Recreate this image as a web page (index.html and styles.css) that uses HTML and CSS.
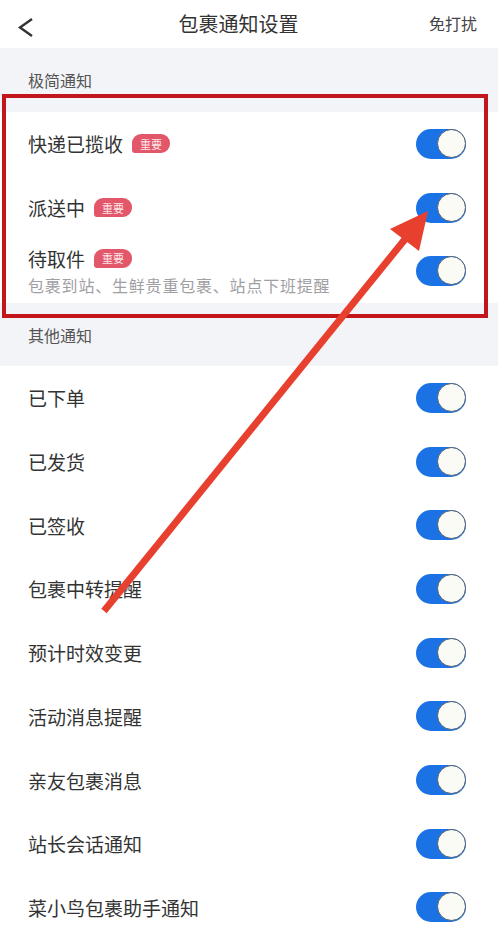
FILE: index.html
```html
<!DOCTYPE html>
<html lang="zh-CN">

<head>
    <meta charset="UTF-8">
    <meta name="viewport" content="width=device-width, initial-scale=1.0">
    <title>包裹通知设置</title>
    <link rel="stylesheet" href="styles.css">
</head>

<body>
    <div class="page">
        <header class="topbar">
            <div class="back">
                <svg width="40" height="40" viewBox="0 0 40 40">
                    <polyline points="32,13 20,21.5 32,30" fill="none" stroke="#333" stroke-width="2.4" stroke-linejoin="miter"/>
                </svg>
            </div>
            <h1 class="title">包裹通知设置</h1>
            <div class="dnd">免打扰</div>
        </header>

        <div class="section-title first">极简通知</div>
        <div class="group important">
            <div class="row">
                <div class="label">快递已揽收 <span class="tag">重要</span></div>
                <span class="switch"></span>
            </div>
            <div class="row">
                <div class="label">派送中 <span class="tag">重要</span></div>
                <span class="switch"></span>
            </div>
            <div class="row">
                <div class="label-wrap">
                    <div class="label">待取件 <span class="tag">重要</span></div>
                    <div class="sub">包裹到站、生鲜贵重包裹、站点下班提醒</div>
                </div>
                <span class="switch"></span>
            </div>
        </div>

        <div class="section-title">其他通知</div>
        <div class="group others">
            <div class="row"><div class="label">已下单</div><span class="switch"></span></div>
            <div class="row"><div class="label">已发货</div><span class="switch"></span></div>
            <div class="row"><div class="label">已签收</div><span class="switch"></span></div>
            <div class="row"><div class="label">包裹中转提醒</div><span class="switch"></span></div>
            <div class="row"><div class="label">预计时效变更</div><span class="switch"></span></div>
            <div class="row"><div class="label">活动消息提醒</div><span class="switch"></span></div>
            <div class="row"><div class="label">亲友包裹消息</div><span class="switch"></span></div>
            <div class="row"><div class="label">站长会话通知</div><span class="switch"></span></div>
            <div class="row"><div class="label">菜小鸟包裹助手通知</div><span class="switch"></span></div>
        </div>

        <!-- annotation drawn over the screenshot -->
        <svg class="marks" width="498" height="943" viewBox="0 0 498 943">
            <rect x="4" y="96" width="482" height="220" fill="none" stroke="#c3161c" stroke-width="4"/>
            <line x1="104" y1="611" x2="406" y2="238" stroke="#e8402f" stroke-width="7" stroke-linecap="butt"/>
            <polygon points="428,211 390,229 419,251" fill="#e8402f"/>
        </svg>
    </div>
</body>

</html>
```

FILE: styles.css
```css
body {
    margin: 0;
    font-family: "Noto Sans CJK SC", "Noto Sans", sans-serif;
    background-color: #ffffff;
    color: #333;
}

.page {
    position: relative;
    display: flex;
    flex-direction: column;
    width: 498px;
    height: 943px;
    overflow: hidden;
    background-color: #f3f4f8;
}

.topbar {
    display: grid;
    grid-template-columns: 1fr auto 1fr;
    align-items: center;
    height: 48px;
    flex-shrink: 0;
    padding: 0 21px 8px 0;
    box-sizing: border-box;
    background-color: #ffffff;
}

.back {
    display: flex;
    align-items: center;
    height: 40px;
    margin-top: 6px;
}

.title {
    margin: 0;
    font-size: 20px;
    font-weight: normal;
    color: #333;
}

.dnd {
    justify-self: end;
    font-size: 16px;
    color: #444;
}

.section-title {
    display: flex;
    align-items: center;
    flex-shrink: 0;
    height: 63px;
    padding-left: 28px;
    font-size: 16px;
    color: #555;
}

.section-title.first {
    height: 64px;
}

.group {
    flex-shrink: 0;
    background-color: #ffffff;
}

.group.others {
    flex-grow: 1;
}

.row {
    display: flex;
    align-items: center;
    justify-content: space-between;
    height: 63.7px;
    padding: 0 32px 0 28px;
}

.label {
    display: flex;
    align-items: center;
    font-size: 19px;
    color: #333;
}

.label-wrap {
    display: flex;
    flex-direction: column;
    gap: 1px;
    margin-top: -1px;
}

.sub {
    font-size: 16px;
    letter-spacing: 0.8px;
    color: #a0a0a4;
}

.tag {
    display: inline-flex;
    align-items: center;
    justify-content: center;
    width: 38px;
    height: 19px;
    margin-left: 9px;
    border-radius: 9px 9px 9px 3px;
    background-color: #e2576a;
    color: #fde6e9;
    font-size: 11px;
}

.switch {
    display: flex;
    justify-content: flex-end;
    width: 50px;
    height: 30px;
    border-radius: 15px;
    background-color: #1a72e4;
}

.switch::after {
    content: "";
    width: 27px;
    height: 27px;
    border-radius: 50%;
    background-color: #fbfbf5;
    border: 1.5px solid #4b5b70;
}

.marks {
    position: absolute;
    top: 0;
    left: 0;
    pointer-events: none;
}
```
